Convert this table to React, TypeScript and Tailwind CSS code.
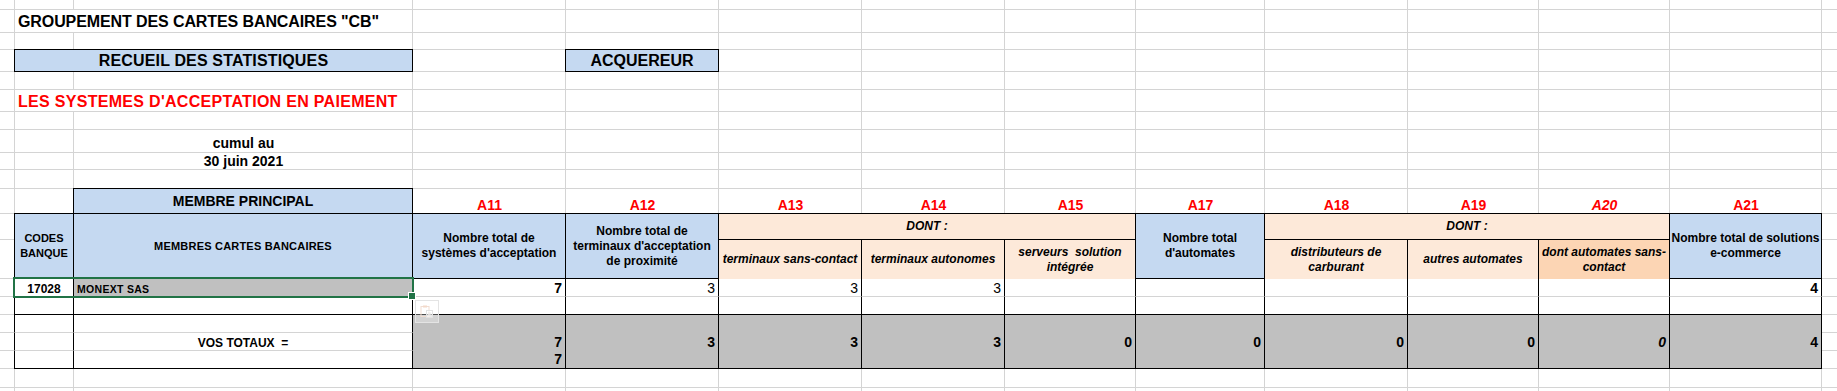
import React from "react";

const COLS =
  "grid-cols-[15px_59px_339px_153px_153px_143px_143px_131px_129px_143px_131px_131px_152px_60px]";
const ROWS =
  "grid-rows-[10px_23px_17px_22px_18px_22px_18px_23px_17px_19px_25px_26px_39px_18px_18px_18px_18px_18px_19px_40px]";

const boxed = "border border-black -ml-px -mt-px";
const blue = "bg-[#C5D9F1]";
const peach = "bg-[#FDE9D9]";
const peachDark = "bg-[#FCD5B4]";

const labels = [
  { col: "col-start-4", text: "A11" },
  { col: "col-start-5", text: "A12" },
  { col: "col-start-6", text: "A13" },
  { col: "col-start-7", text: "A14" },
  { col: "col-start-8", text: "A15" },
  { col: "col-start-9", text: "A17" },
  { col: "col-start-10", text: "A18" },
  { col: "col-start-11", text: "A19" },
  { col: "col-start-12", text: "A20", italic: true },
  { col: "col-start-13", text: "A21" },
];

type DataCol = {
  col: string;
  value?: string;
  bold?: boolean;
  total: string;
  total2?: string;
  italic?: boolean;
};

const dataCols: DataCol[] = [
  { col: "col-start-4", value: "7", bold: true, total: "7", total2: "7" },
  { col: "col-start-5", value: "3", total: "3" },
  { col: "col-start-6", value: "3", total: "3" },
  { col: "col-start-7", value: "3", total: "3" },
  { col: "col-start-8", total: "0" },
  { col: "col-start-9", total: "0" },
  { col: "col-start-10", total: "0" },
  { col: "col-start-11", total: "0" },
  { col: "col-start-12", total: "0", italic: true },
  { col: "col-start-13", value: "4", bold: true, total: "4" },
];

const subHeaders = [
  { col: "col-start-6", bg: peach, text: ["terminaux sans-contact"] },
  { col: "col-start-7", bg: peach, text: ["terminaux autonomes"] },
  { col: "col-start-8", bg: peach, text: ["serveurs\u00a0 solution", "intégrée"] },
  { col: "col-start-10", bg: peach, text: ["distributeurs de", "carburant"] },
  { col: "col-start-11", bg: peach, text: ["autres automates"] },
  { col: "col-start-12", bg: peachDark, text: ["dont automates sans-", "contact"] },
];

function Lines({ lines }: { lines: string[] }) {
  return (
    <>
      {lines.map((l, i) => (
        <React.Fragment key={i}>
          {i > 0 && <br />}
          {l}
        </React.Fragment>
      ))}
    </>
  );
}

export default function App() {
  const header = `${boxed} ${blue} flex items-center justify-center text-center font-bold whitespace-nowrap`;

  return (
    <div className="w-[1837px] h-[391px] overflow-hidden bg-white grid font-['Liberation_Sans',Arial,sans-serif] text-black">
      {/* sheet gridlines */}
      <div className={`col-start-1 row-start-1 grid ${COLS} ${ROWS}`}>
        {Array.from({ length: 280 }).map((_, i) => (
          <div key={i} className="border-r border-b border-[#d4d4d4]" />
        ))}
      </div>

      {/* cells */}
      <div className={`col-start-1 row-start-1 grid ${COLS} ${ROWS}`}>
        {/* top titles */}
        <div className="col-start-2 col-span-2 row-start-2 bg-white border-r border-b border-[#d4d4d4] pl-[3px] pt-[4px] text-[16px] leading-4 font-bold tracking-[-0.1px] whitespace-nowrap">
          GROUPEMENT DES CARTES BANCAIRES "CB"
        </div>
        <div className={`col-start-2 col-span-2 row-start-4 ${boxed} ${blue} text-center font-bold text-[16px] leading-4 pt-[3px] tracking-[0.15px]`}>
          RECUEIL DES STATISTIQUES
        </div>
        <div className={`col-start-5 row-start-4 ${boxed} ${blue} text-center font-bold text-[16px] leading-4 pt-[3px]`}>
          ACQUEREUR
        </div>
        <div className="col-start-2 col-span-2 row-start-6 bg-white border-r border-b border-[#d4d4d4] pl-[3px] pt-[4px] text-[16px] leading-4 font-bold tracking-[0.3px] text-[#FF0000] whitespace-nowrap">
          LES SYSTEMES D'ACCEPTATION EN PAIEMENT
        </div>
        <div className="col-start-3 row-start-8 text-center font-bold text-[14px] leading-[14px] pt-[6px]">
          cumul au
        </div>
        <div className="col-start-3 row-start-9 text-center font-bold text-[14px] leading-[14px] pt-[1px]">
          30 juin 2021
        </div>

        {/* column codes */}
        <div className={`col-start-3 row-start-11 ${boxed} ${blue} text-center font-bold text-[14px] leading-[14px] pt-[5px]`}>
          MEMBRE PRINCIPAL
        </div>
        {labels.map((l) => (
          <div
            key={l.text}
            className={`${l.col} row-start-11 text-center text-[#FF0000] font-bold text-[14px] leading-[14px] pt-[9px] ${
              l.italic ? "italic" : ""
            }`}
          >
            {l.text}
          </div>
        ))}

        {/* header */}
        <div className={`col-start-2 row-start-12 row-span-2 ${header} text-[11px] leading-[15px]`}>
          CODES
          <br />
          BANQUE
        </div>
        <div className={`col-start-3 row-start-12 row-span-2 ${header} text-[11px] leading-[15px] tracking-[0.2px]`}>
          MEMBRES CARTES BANCAIRES
        </div>
        <div className={`col-start-4 row-start-12 row-span-2 ${header} text-[12px] leading-[15px]`}>
          Nombre total de
          <br />
          systèmes d'acceptation
        </div>
        <div className={`col-start-5 row-start-12 row-span-2 ${header} text-[12px] leading-[15px]`}>
          Nombre total de
          <br />
          terminaux d'acceptation
          <br />
          de proximité
        </div>
        <div className={`col-start-6 col-span-3 row-start-12 ${boxed} ${peach} flex items-center justify-center italic font-bold text-[12px] leading-[15px]`}>
          DONT :
        </div>
        <div className={`col-start-9 row-start-12 row-span-2 ${header} text-[12px] leading-[15px]`}>
          Nombre total
          <br />
          d'automates
        </div>
        <div className={`col-start-10 col-span-3 row-start-12 ${boxed} ${peach} flex items-center justify-center italic font-bold text-[12px] leading-[15px]`}>
          DONT :
        </div>
        <div className={`col-start-13 row-start-12 row-span-2 ${header} text-[12px] leading-[15px]`}>
          Nombre total de solutions
          <br />
          e-commerce
        </div>
        {subHeaders.map((s) => (
          <div
            key={s.col}
            className={`${s.col} row-start-13 ${s.bg} border-r border-black flex items-center justify-center text-center italic font-bold text-[12px] leading-[15px] whitespace-nowrap`}
          >
            <span>
              <Lines lines={s.text} />
            </span>
          </div>
        ))}

        {/* member row */}
        <div className="col-start-2 row-start-14 -ml-px border-l border-r border-b border-l-black border-r-black border-b-[#d4d4d4] text-center font-bold text-[12px] leading-3 pt-[4px]">
          17028
        </div>
        <div className="col-start-3 row-start-14 bg-[#C0C0C0] border-r border-b border-r-black border-b-[#d4d4d4] pl-[3px] pt-[5px] font-bold text-[10.5px] leading-[10px] tracking-[0.3px]">
          MONEXT SAS
        </div>
        {dataCols.map((c) => (
          <div
            key={c.col}
            className={`${c.col} row-start-14 border-r border-b border-r-black border-b-[#d4d4d4] text-right pr-[3px] pt-[2px] text-[14px] leading-[14px] ${
              c.bold ? "font-bold" : ""
            }`}
          >
            {c.value}
          </div>
        ))}
        <div className="col-start-2 row-start-15 -ml-px border-l border-r border-b border-black" />
        <div className="col-start-3 row-start-15 border-r border-b border-black" />
        {dataCols.map((c) => (
          <div key={c.col} className={`${c.col} row-start-15 border-r border-b border-black`} />
        ))}

        {/* totals */}
        <div className="col-start-2 row-start-16 -ml-px border-l border-r border-b border-l-black border-r-black border-b-[#d4d4d4]" />
        <div className="col-start-2 row-start-17 -ml-px border-l border-r border-b border-l-black border-r-black border-b-[#d4d4d4]" />
        <div className="col-start-2 row-start-18 -ml-px border-l border-r border-b border-black" />
        <div className="col-start-3 row-start-16 border-r border-b border-r-black border-b-[#d4d4d4]" />
        <div className="col-start-3 row-start-17 border-r border-b border-r-black border-b-[#d4d4d4] text-center font-bold text-[12px] leading-3 pt-[4px] whitespace-pre">
          VOS TOTAUX  =
        </div>
        <div className="col-start-3 row-start-18 border-r border-b border-black" />
        {dataCols.map((c) => (
          <div
            key={c.col}
            className={`${c.col} row-start-16 row-span-3 bg-[#C0C0C0] border-r border-b border-black flex flex-col text-right pr-[3px] font-bold text-[14px] leading-[14px] ${
              c.italic ? "italic" : ""
            }`}
          >
            <div className="h-[18px]" />
            <div className="h-[18px] pt-[2px]">{c.total}</div>
            <div className="h-[18px] pt-[2px]">{c.total2}</div>
          </div>
        ))}

        {/* paste options ghost */}
        <div className="col-start-4 row-start-15 self-start justify-self-start ml-[2px] mt-[3px] w-[24px] h-[23px] border border-[#e4e4e4] bg-white/30 flex items-center justify-center">
          <svg width="16" height="16" viewBox="0 0 16 16" fill="none">
            <rect x="2" y="2.5" width="8" height="10" stroke="#f1ddd2" />
            <rect x="4" y="1.5" width="4" height="2" fill="#f3d9c9" />
            <rect x="7.5" y="6.5" width="6" height="7" fill="#ffffff" fillOpacity="0.5" stroke="#e2e2e2" />
            <path d="M9 9h3M9 11h3" stroke="#e6e6e6" />
          </svg>
        </div>

        {/* selection */}
        <div className="col-start-2 col-span-2 row-start-14 -ml-[2px] -mt-[2px] -mr-px -mb-px border-2 border-[#217346] relative">
          <div className="absolute -right-[3px] -bottom-[3px] w-[6px] h-[6px] bg-[#217346] outline outline-1 outline-white" />
        </div>
      </div>
    </div>
  );
}
